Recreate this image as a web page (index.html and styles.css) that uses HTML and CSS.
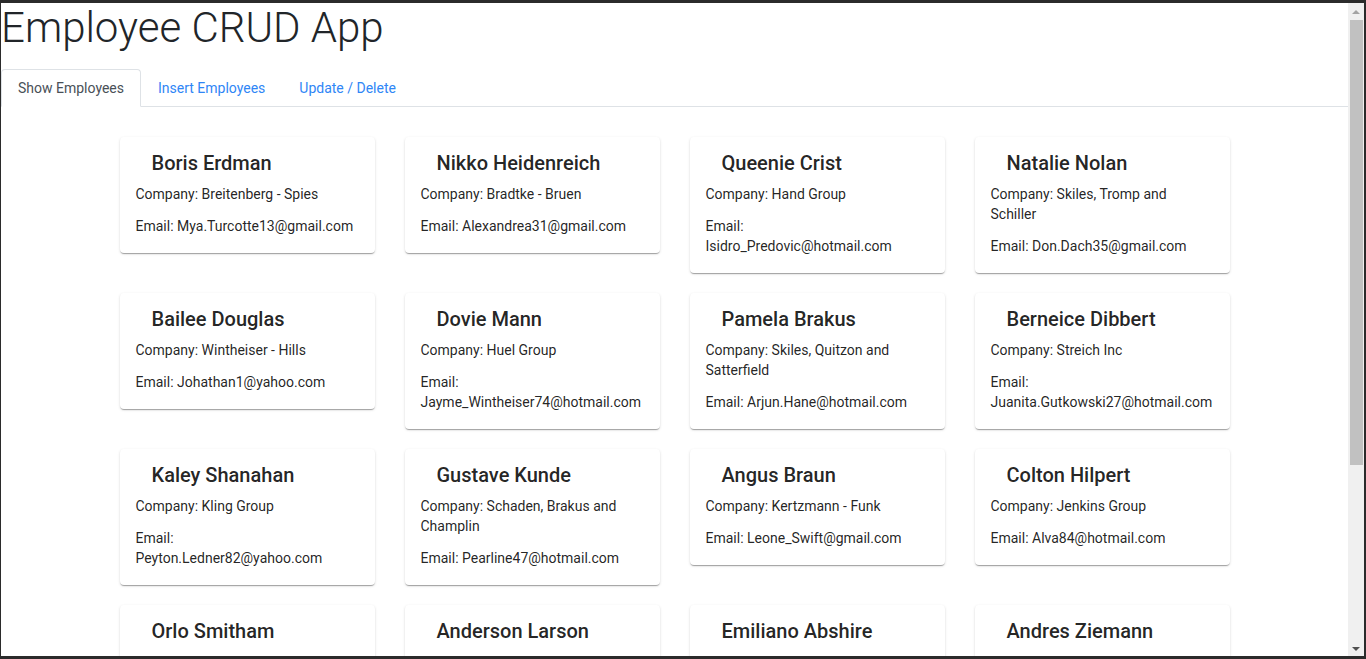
FILE: index.html
```html
<!DOCTYPE html>
<html lang="en">
<head>
<meta charset="utf-8">
<title>Employee CRUD App</title>
<link rel="stylesheet" href="styles.css">
</head>
<body>
<div class="window">
  <div class="viewport">
    <h1 class="title">Employee CRUD App</h1>
    <ul class="tabs">
      <li class="tab active">Show Employees</li>
      <li class="tab">Insert Employees</li>
      <li class="tab">Update / Delete</li>
    </ul>
    <main class="grid">
      <div class="card"><h2 class="name">Boris Erdman</h2><p>Company: Breitenberg - Spies</p><p>Email: Mya.Turcotte13@gmail.com</p></div>
      <div class="card"><h2 class="name">Nikko Heidenreich</h2><p>Company: Bradtke - Bruen</p><p>Email: Alexandrea31@gmail.com</p></div>
      <div class="card"><h2 class="name">Queenie Crist</h2><p>Company: Hand Group</p><p>Email: Isidro_Predovic@hotmail.com</p></div>
      <div class="card"><h2 class="name">Natalie Nolan</h2><p>Company: Skiles, Tromp and Schiller</p><p>Email: Don.Dach35@gmail.com</p></div>

      <div class="card"><h2 class="name">Bailee Douglas</h2><p>Company: Wintheiser - Hills</p><p>Email: Johathan1@yahoo.com</p></div>
      <div class="card"><h2 class="name">Dovie Mann</h2><p>Company: Huel Group</p><p>Email: Jayme_Wintheiser74@hotmail.com</p></div>
      <div class="card"><h2 class="name">Pamela Brakus</h2><p>Company: Skiles, Quitzon and Satterfield</p><p>Email: Arjun.Hane@hotmail.com</p></div>
      <div class="card"><h2 class="name">Berneice Dibbert</h2><p>Company: Streich Inc</p><p>Email: Juanita.Gutkowski27@hotmail.com</p></div>

      <div class="card"><h2 class="name">Kaley Shanahan</h2><p>Company: Kling Group</p><p>Email: Peyton.Ledner82@yahoo.com</p></div>
      <div class="card"><h2 class="name">Gustave Kunde</h2><p>Company: Schaden, Brakus and Champlin</p><p>Email: Pearline47@hotmail.com</p></div>
      <div class="card"><h2 class="name">Angus Braun</h2><p>Company: Kertzmann - Funk</p><p>Email: Leone_Swift@gmail.com</p></div>
      <div class="card"><h2 class="name">Colton Hilpert</h2><p>Company: Jenkins Group</p><p>Email: Alva84@hotmail.com</p></div>

      <div class="card"><h2 class="name">Orlo Smitham</h2><p>Company: Hodkiewicz, Kuhlman and Hegmann</p><p>Email: Orlo.Smitham@gmail.com</p></div>
      <div class="card"><h2 class="name">Anderson Larson</h2><p>Company: Mueller LLC</p><p>Email: Anderson44@yahoo.com</p></div>
      <div class="card"><h2 class="name">Emiliano Abshire</h2><p>Company: Rempel Group</p><p>Email: Emiliano.Abshire@gmail.com</p></div>
      <div class="card"><h2 class="name">Andres Ziemann</h2><p>Company: Wolff - Kuhn</p><p>Email: Andres61@hotmail.com</p></div>
    </main>
  </div>
  <div class="scrollbar">
    <span class="arrow arrow-up"></span>
    <div class="thumb"></div>
    <div class="track-rest"></div>
    <span class="arrow arrow-down"></span>
  </div>
</div>
</body>
</html>
```

FILE: styles.css
```css
* {
  box-sizing: border-box;
}

html, body {
  margin: 0;
  padding: 0;
  background: #2b2b2b;
}

body {
  font-family: Roboto, "Liberation Sans", Arial, sans-serif;
  font-size: 14px;
  color: #212529;
}

.window {
  height: 659px;
  display: flex;
  border-style: solid;
  border-color: #2b2b2b;
  border-width: 3px 2px 3px 1px;
  overflow: hidden;
  background: #fff;
}

.viewport {
  flex: 1;
  min-width: 0;
  overflow: hidden;
  background: #fff;
}

.title {
  margin: 0 0 17px 0;
  font-family: Roboto, "Liberation Sans", sans-serif;
  font-weight: 300;
  font-size: 42px;
  line-height: 49px;
  color: #212529;
}

.tabs {
  list-style: none;
  margin: 0;
  padding: 0;
  display: flex;
  border-bottom: 1px solid #dee2e6;
}

.tab {
  padding: 8px 16px;
  line-height: 20px;
  font-size: 14px;
  color: #2f86f6;
  border: 1px solid transparent;
  border-radius: 4px 4px 0 0;
  margin-bottom: -1px;
}

.tab.active {
  color: #495057;
  background: #fff;
  border-color: #dee2e6 #dee2e6 #fff;
}

.grid {
  display: grid;
  grid-template-columns: repeat(4, 255px);
  column-gap: 30px;
  row-gap: 20px;
  justify-content: center;
  align-items: start;
  padding-top: 30px;
}

.card {
  background: #fff;
  border-radius: 4px;
  box-shadow: 0px 2px 1px -1px rgba(0,0,0,0.2), 0px 1px 1px 0px rgba(0,0,0,0.14), 0px 1px 3px 0px rgba(0,0,0,0.12);
  padding: 14px 16px 17px;
  color: rgba(0,0,0,0.87);
}

.name {
  margin: 0 0 9px 0;
  padding-left: 16px;
  font-size: 20px;
  font-weight: 500;
  line-height: 24px;
  color: rgba(0,0,0,0.87);
}

.card p {
  margin: 0;
  font-size: 14px;
  line-height: 20px;
}

.card p + p {
  margin-top: 12px;
}

.scrollbar {
  width: 16px;
  flex: none;
  background: #f0f0f0;
  display: flex;
  flex-direction: column;
  align-items: center;
}

.arrow {
  width: 0;
  height: 0;
  border-left: 4px solid transparent;
  border-right: 4px solid transparent;
  flex: none;
}

.arrow-up {
  margin-top: 7px;
  margin-bottom: 6px;
  border-bottom: 4px solid #a3a3a3;
}

.arrow-down {
  margin-bottom: 5px;
  margin-top: 6px;
  border-top: 4px solid #505050;
}

.thumb {
  width: 13px;
  margin-left: 1px;
  height: 445px;
  background: #c1c1c1;
  flex: none;
}

.track-rest {
  flex: 1;
}
```
